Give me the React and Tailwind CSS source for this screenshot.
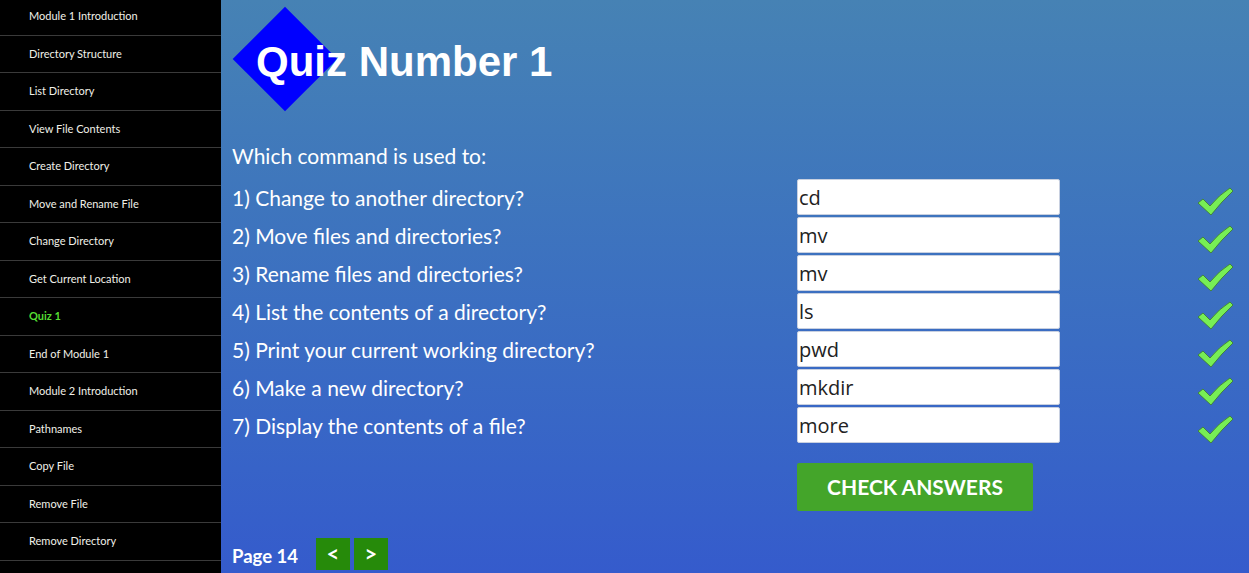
import React, { useState } from "react";

const lessons = [
  "Module 1 Introduction",
  "Directory Structure",
  "List Directory",
  "View File Contents",
  "Create Directory",
  "Move and Rename File",
  "Change Directory",
  "Get Current Location",
  "Quiz 1",
  "End of Module 1",
  "Module 2 Introduction",
  "Pathnames",
  "Copy File",
  "Remove File",
  "Remove Directory",
];

const questions = [
  { q: "1) Change to another directory?", a: "cd" },
  { q: "2) Move files and directories?", a: "mv" },
  { q: "3) Rename files and directories?", a: "mv" },
  { q: "4) List the contents of a directory?", a: "ls" },
  { q: "5) Print your current working directory?", a: "pwd" },
  { q: "6) Make a new directory?", a: "mkdir" },
  { q: "7) Display the contents of a file?", a: "more" },
];

function Tick() {
  return (
    <svg width="38" height="30" viewBox="0 0 38 30">
      <path
        d="M1 17 L6 13 L13 20 Q22 9 33 2 L36 5 Q25 15 14 29 Z"
        fill="#77ee55"
        stroke="#3b7a2a"
        strokeWidth="0.8"
        strokeLinejoin="round"
      />
    </svg>
  );
}

export default function App() {
  const [answers, setAnswers] = useState(questions.map((q) => q.a));

  return (
    <div className="flex h-[573px] w-full overflow-hidden font-['Lato',sans-serif]">
      <nav className="w-[221px] shrink-0 bg-black">
        <div className="-mt-[2px]">
          {lessons.map((lesson) => (
            <div
              key={lesson}
              className="flex h-[37.5px] items-center border-b border-[#3a3a3a] pl-[29px]"
            >
              <span
                className={
                  lesson === "Quiz 1"
                    ? "text-[11px] font-bold text-[#55dd33]"
                    : "text-[11px] text-[#f0f0e8]"
                }
              >
                {lesson}
              </span>
            </div>
          ))}
        </div>
      </nav>

      <main className="flex-1 bg-gradient-to-b from-[#4682b4] to-[#355bcc] pl-[11px] text-white">
        <div className="relative mt-[7px] h-[106px]">
          <div className="absolute left-[16px] top-[15px] h-[74px] w-[74px] rotate-45 bg-[#0000ff]" />
          <h1 className="relative pl-[24px] pt-[30px] font-['Liberation_Sans',sans-serif] text-[42px] font-bold leading-[50px]">
            Quiz Number 1
          </h1>
        </div>

        <p className="mt-[30px] text-[21px] leading-[26px]">Which command is used to:</p>

        <div className="mt-[10px] flex flex-col gap-[2px]">
          {questions.map((item, i) => (
            <div key={i} className="flex h-[36px] items-center">
              <span className="w-[565px] pt-[1px] text-[21px] leading-[26px]">{item.q}</span>
              <input
                value={answers[i]}
                onChange={(e) => {
                  const next = [...answers];
                  next[i] = e.target.value;
                  setAnswers(next);
                }}
                className="h-[36px] w-[263px] rounded-[2px] border border-[#c8d0e0] bg-white pl-[1px] font-['Open_Sans',sans-serif] text-[20px] text-[#222] outline-none"
              />
              <div className="ml-[137px] mt-[8px]">
                <Tick />
              </div>
            </div>
          ))}
        </div>

        <div className="mt-[20px] pl-[565px]">
          <button className="h-[48px] w-[236px] rounded-[2px] bg-[#44a52a] text-[21px] font-bold text-white">
            CHECK ANSWERS
          </button>
        </div>

        <div className="mt-[26px] flex items-center">
          <span className="mt-[6px] text-[18.5px] font-bold">Page 14</span>
          <button className="ml-[18px] h-[32px] w-[34px] bg-[#268a0a] text-[22px] font-bold leading-none">&lt;</button>
          <button className="ml-[4px] h-[32px] w-[34px] bg-[#268a0a] text-[22px] font-bold leading-none">&gt;</button>
        </div>
      </main>
    </div>
  );
}
